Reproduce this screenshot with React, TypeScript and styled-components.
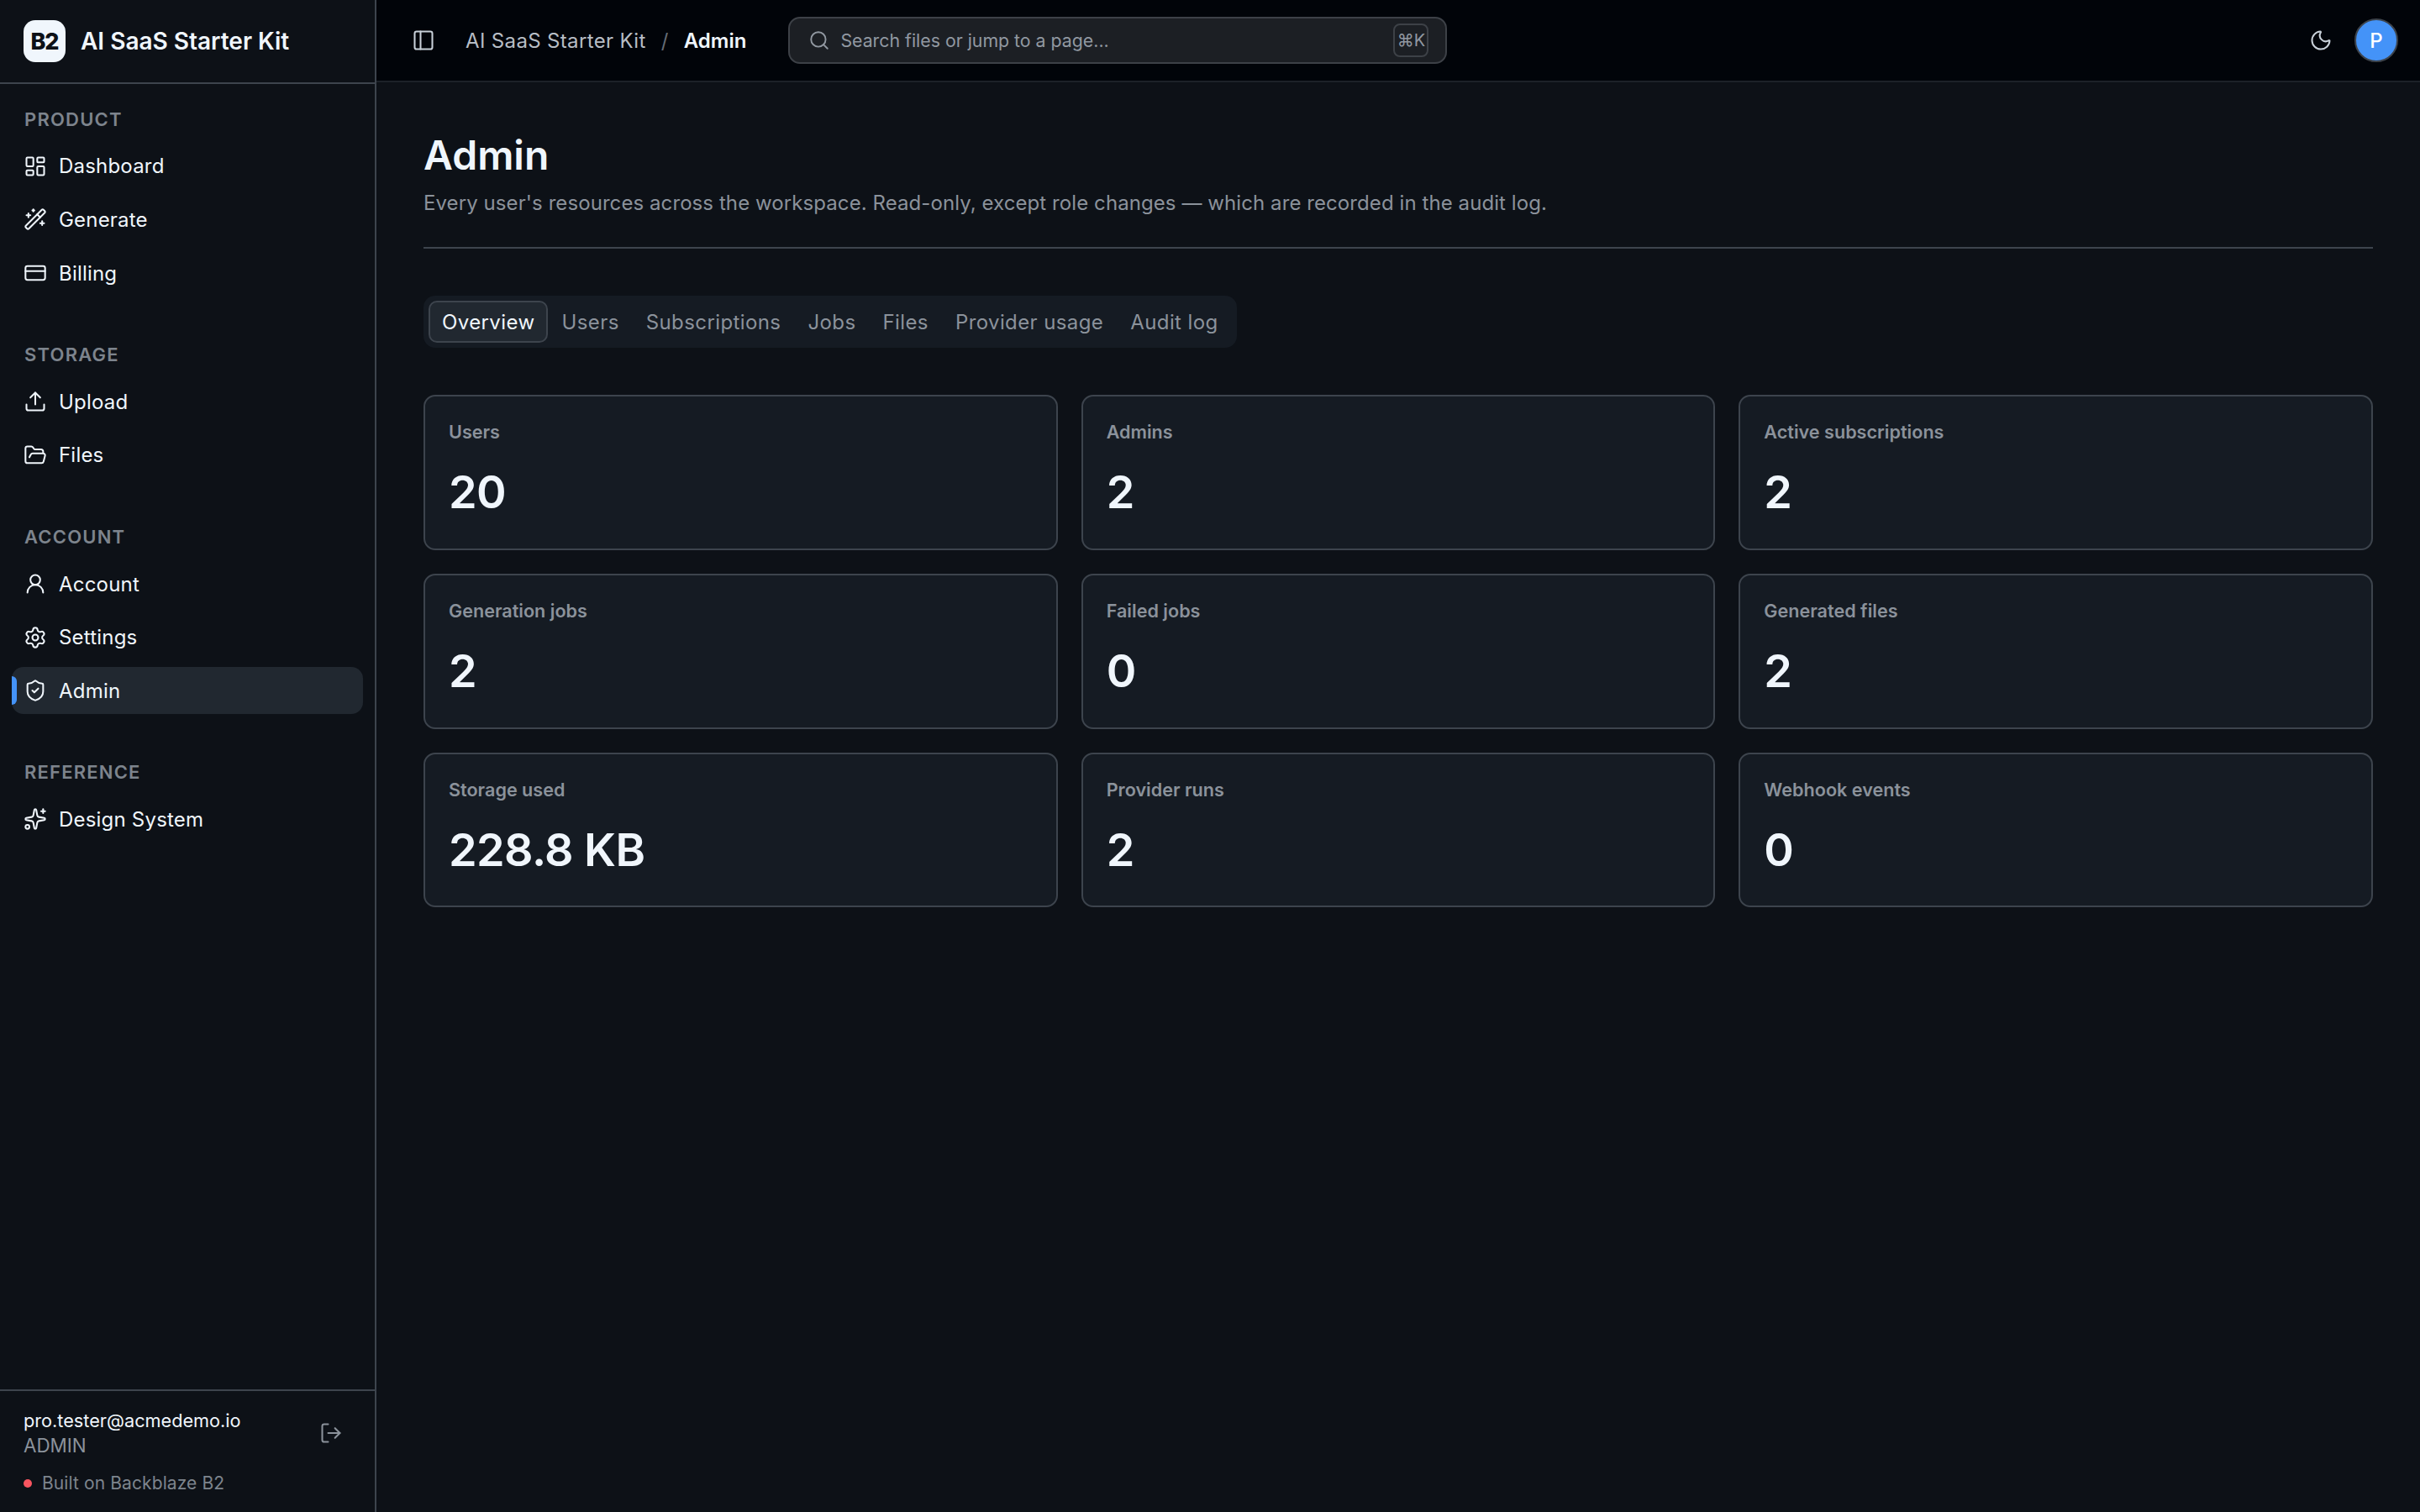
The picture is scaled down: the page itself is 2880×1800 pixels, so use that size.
import React from "react";
import styled, { createGlobalStyle } from "styled-components";
import {
  CreditCard,
  FolderOpen,
  LayoutDashboard,
  LogOut,
  Moon,
  PanelLeft,
  Search,
  Settings,
  ShieldCheck,
  Sparkles,
  Upload,
  UserRound,
  WandSparkles,
} from "lucide-react";

const GlobalStyle = createGlobalStyle`
  html, body, #root {
    margin: 0;
    height: 100%;
    background: #0d1117;
  }
  body {
    font-family: Inter, "Noto Sans", sans-serif;
    color: #f0f6fc;
    overflow: hidden;
  }
  * {
    box-sizing: border-box;
  }
`;

const Shell = styled.div`
  display: flex;
  width: 2880px;
  height: 1800px;
`;

const Sidebar = styled.aside`
  width: 448px;
  flex: none;
  display: flex;
  flex-direction: column;
  background: #0d1117;
  border-right: 2px solid #3d444d;
`;

const Brand = styled.div`
  height: 100px;
  flex: none;
  display: flex;
  align-items: center;
  gap: 18px;
  padding: 0 28px;
  border-bottom: 2px solid #3d444d;
`;

const LogoMark = styled.div`
  width: 50px;
  height: 50px;
  border-radius: 14px;
  background: #f0f6fc;
  color: #0d1117;
  display: flex;
  align-items: center;
  justify-content: center;
  font-size: 27px;
  font-weight: 800;
  letter-spacing: -1.2px;
`;

const BrandName = styled.span`
  font-size: 28px;
  font-weight: 600;
`;

const Nav = styled.nav`
  flex: 1;
  display: flex;
  flex-direction: column;
  gap: 53.8px;
  padding: 26.5px 14px 0;
`;

const Section = styled.div`
  display: flex;
  flex-direction: column;
  gap: 7.6px;
`;

const SectionLabel = styled.div`
  height: 30px;
  line-height: 30px;
  margin: 0 0 5.8px 15px;
  font-size: 22px;
  font-weight: 600;
  letter-spacing: 1.2px;
  color: #7d848d;
`;

const NavItem = styled.a<{ $active?: boolean }>`
  position: relative;
  height: 56px;
  display: flex;
  align-items: center;
  gap: 14px;
  padding: 0 14px;
  border-radius: 14px;
  font-size: 24px;
  letter-spacing: 0.2px;
  color: #f0f6fc;
  background: ${(p) => (p.$active ? "#212830" : "transparent")};

  svg {
    flex: none;
  }
`;

const ActiveBar = styled.span`
  position: absolute;
  left: 0;
  top: 11px;
  width: 6px;
  height: 34px;
  border-radius: 0 6px 6px 0;
  background: #4493f8;
`;

const SidebarFooter = styled.div`
  flex: none;
  height: 146px;
  padding: 20px 28px 0;
  border-top: 2px solid #3d444d;
`;

const UserRow = styled.div`
  display: flex;
  align-items: center;
  justify-content: space-between;
  padding-right: 10px;
  color: #8b929b;
`;

const UserEmail = styled.div`
  font-size: 21.7px;
  line-height: 30px;
  color: #f0f6fc;
`;

const UserRole = styled.div`
  font-size: 22.4px;
  line-height: 30px;
  color: #8b929b;
`;

const BuiltOn = styled.div`
  display: flex;
  align-items: center;
  gap: 12px;
  margin-top: 16px;
  font-size: 21px;
  line-height: 28px;
  letter-spacing: 0.1px;
  color: #7d848d;
`;

const StatusDot = styled.span`
  width: 10px;
  height: 10px;
  border-radius: 50%;
  background: #f85560;
`;

const Content = styled.div`
  flex: 1;
  min-width: 0;
  display: flex;
  flex-direction: column;
`;

const TopBar = styled.header`
  height: 98px;
  flex: none;
  display: flex;
  align-items: center;
  padding: 0 26px 0 42px;
  background: #010409;
  border-bottom: 2px solid #1c2128;
  color: #c9d1d9;
`;

const Crumbs = styled.div`
  display: flex;
  align-items: center;
  gap: 18px;
  margin-left: 36px;
  font-size: 24px;
  letter-spacing: 0.35px;
  color: #b7bdc5;
`;

const CrumbSlash = styled.span`
  color: #656c76;
`;

const CrumbCurrent = styled.span`
  font-weight: 600;
  letter-spacing: 0;
  color: #f0f6fc;
`;

const SearchBox = styled.div`
  width: 784px;
  height: 56px;
  margin-left: 50px;
  display: flex;
  align-items: center;
  gap: 12px;
  padding: 0 20px 0 22px;
  border: 2px solid #3d4147;
  border-radius: 14px;
  background: #1c1f24;
  color: #9198a1;
  font-size: 21.3px;
`;

const SearchText = styled.span`
  flex: 1;
`;

const Kbd = styled.kbd`
  width: 42px;
  height: 40px;
  display: flex;
  align-items: center;
  justify-content: center;
  border: 2px solid #3d4147;
  border-radius: 8px;
  font-family: Inter, "DejaVu Sans", sans-serif;
  font-size: 20px;
  color: #9198a1;
`;

const TopActions = styled.div`
  margin-left: auto;
  display: flex;
  align-items: center;
  gap: 26px;
`;

const Avatar = styled.div`
  width: 52px;
  height: 52px;
  display: flex;
  align-items: center;
  justify-content: center;
  border: 2px solid #3d444d;
  border-radius: 50%;
  background: #4493f8;
  color: #ffffff;
  font-size: 24px;
  font-weight: 500;
`;

const Main = styled.main`
  flex: 1;
  padding: 56px;
`;

const PageHead = styled.div`
  height: 142px;
  border-bottom: 2px solid #3d444d;
`;

const Title = styled.h1`
  margin: 0;
  font-size: 48px;
  line-height: 62px;
  font-weight: 600;
`;

const Subtitle = styled.p`
  margin: 8.5px 0 0;
  font-size: 24px;
  line-height: 34px;
  letter-spacing: 0.08px;
  color: #8b929b;
`;

const Tabs = styled.div`
  display: inline-flex;
  height: 62px;
  margin-top: 56px;
  padding: 6px;
  background: #151b23;
  border-radius: 14px;
`;

const Tab = styled.div<{ $active?: boolean }>`
  display: flex;
  align-items: center;
  padding: 0 14px;
  border: 2px solid ${(p) => (p.$active ? "#3d444d" : "transparent")};
  border-radius: 10px;
  font-size: 24px;
  letter-spacing: 0.4px;
  color: ${(p) => (p.$active ? "#f0f6fc" : "#8b929b")};
  background: ${(p) => (p.$active ? "#212830" : "transparent")};
`;

const StatGrid = styled.div`
  display: grid;
  grid-template-columns: repeat(3, 1fr);
  grid-auto-rows: 184.8px;
  gap: 28px;
  margin-top: 56px;
`;

const StatCard = styled.div`
  padding: 28px 28px 0;
  background: #151b23;
  border: 2px solid #3d444d;
  border-radius: 14px;
`;

const StatLabel = styled.div`
  font-size: 21.6px;
  line-height: 28px;
  font-weight: 600;
  color: #8b929b;
`;

const StatValue = styled.div`
  margin-top: 24px;
  font-size: 54px;
  line-height: 68px;
  font-weight: 600;
  letter-spacing: -0.6px;
`;

const navSections = [
  {
    label: "PRODUCT",
    items: [
      { name: "Dashboard", icon: LayoutDashboard },
      { name: "Generate", icon: WandSparkles },
      { name: "Billing", icon: CreditCard },
    ],
  },
  {
    label: "STORAGE",
    items: [
      { name: "Upload", icon: Upload },
      { name: "Files", icon: FolderOpen },
    ],
  },
  {
    label: "ACCOUNT",
    items: [
      { name: "Account", icon: UserRound },
      { name: "Settings", icon: Settings },
      { name: "Admin", icon: ShieldCheck },
    ],
  },
  {
    label: "REFERENCE",
    items: [{ name: "Design System", icon: Sparkles }],
  },
];

const tabs = ["Overview", "Users", "Subscriptions", "Jobs", "Files", "Provider usage", "Audit log"];

const stats = [
  { label: "Users", value: "20" },
  { label: "Admins", value: "2" },
  { label: "Active subscriptions", value: "2" },
  { label: "Generation jobs", value: "2" },
  { label: "Failed jobs", value: "0" },
  { label: "Generated files", value: "2" },
  { label: "Storage used", value: "228.8 KB" },
  { label: "Provider runs", value: "2" },
  { label: "Webhook events", value: "0" },
];

const App = () => {
  return (
    <Shell>
      <GlobalStyle />
      <Sidebar>
        <Brand>
          <LogoMark>B2</LogoMark>
          <BrandName>AI SaaS Starter Kit</BrandName>
        </Brand>
        <Nav>
          {navSections.map((section) => (
            <Section key={section.label}>
              <SectionLabel>{section.label}</SectionLabel>
              {section.items.map((item) => (
                <NavItem key={item.name} $active={item.name === "Admin"}>
                  {item.name === "Admin" && <ActiveBar />}
                  <item.icon size={28} strokeWidth={1.75} />
                  {item.name}
                </NavItem>
              ))}
            </Section>
          ))}
        </Nav>
        <SidebarFooter>
          <UserRow>
            <div>
              <UserEmail>pro.tester@acmedemo.io</UserEmail>
              <UserRole>ADMIN</UserRole>
            </div>
            <LogOut size={28} strokeWidth={1.75} />
          </UserRow>
          <BuiltOn>
            <StatusDot />
            Built on Backblaze B2
          </BuiltOn>
        </SidebarFooter>
      </Sidebar>
      <Content>
        <TopBar>
          <PanelLeft size={28} strokeWidth={1.75} />
          <Crumbs>
            AI SaaS Starter Kit
            <CrumbSlash>/</CrumbSlash>
            <CrumbCurrent>Admin</CrumbCurrent>
          </Crumbs>
          <SearchBox>
            <Search size={26} strokeWidth={1.75} />
            <SearchText>Search files or jump to a page...</SearchText>
            <Kbd>⌘K</Kbd>
          </SearchBox>
          <TopActions>
            <Moon size={28} strokeWidth={1.75} />
            <Avatar>P</Avatar>
          </TopActions>
        </TopBar>
        <Main>
          <PageHead>
            <Title>Admin</Title>
            <Subtitle>
              Every user's resources across the workspace. Read-only, except role changes — which are recorded in the audit log.
            </Subtitle>
          </PageHead>
          <Tabs>
            {tabs.map((tab) => (
              <Tab key={tab} $active={tab === "Overview"}>
                {tab}
              </Tab>
            ))}
          </Tabs>
          <StatGrid>
            {stats.map((stat) => (
              <StatCard key={stat.label}>
                <StatLabel>{stat.label}</StatLabel>
                <StatValue>{stat.value}</StatValue>
              </StatCard>
            ))}
          </StatGrid>
        </Main>
      </Content>
    </Shell>
  );
};

export default App;
